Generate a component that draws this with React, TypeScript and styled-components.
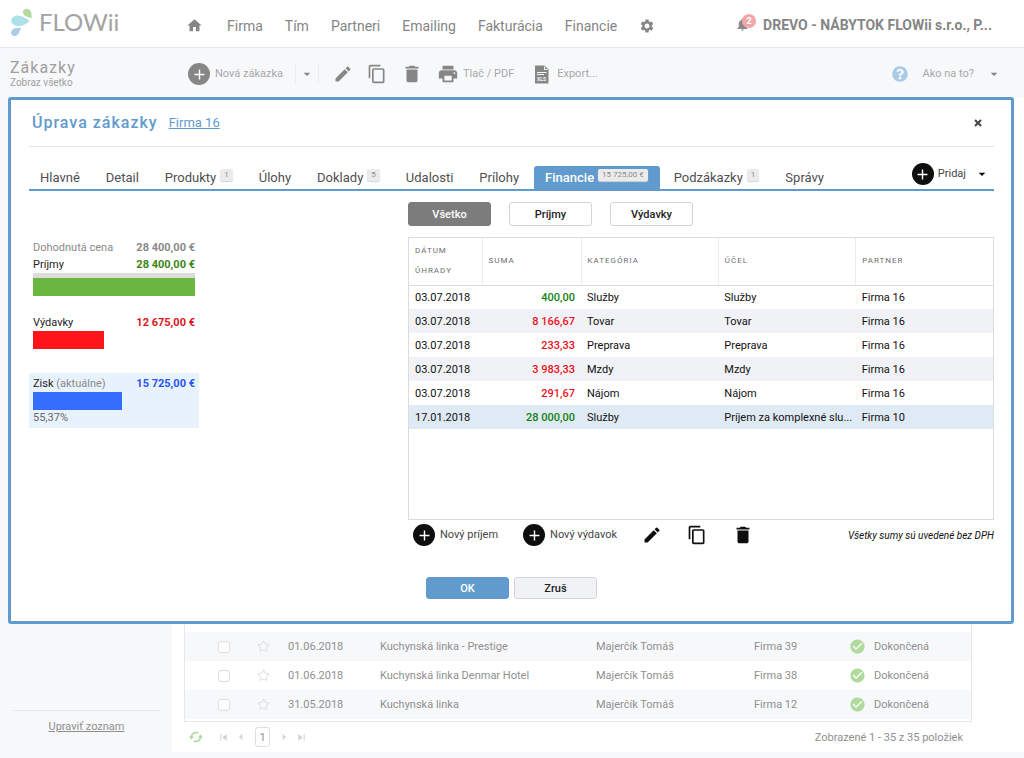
import React from "react";
import styled, { createGlobalStyle } from "styled-components";
import {
  MdAdd,
  MdArrowDropDown,
  MdArrowLeft,
  MdArrowRight,
  MdCheckCircle,
  MdContentCopy,
  MdDelete,
  MdEdit,
  MdHome,
  MdNotifications,
  MdPrint,
  MdSettings,
  MdSkipNext,
  MdSkipPrevious,
} from "react-icons/md";
import { FaQuestionCircle } from "react-icons/fa";
import { Star } from "lucide-react";

const GlobalStyle = createGlobalStyle`
  * { box-sizing: border-box; }
  body { margin: 0; background: #f7f8fa; font-family: Roboto, "Liberation Sans", sans-serif; font-size: 11px; color: #222; }
  button, input { font: inherit; }
`;

const Page = styled.div`
  position: relative;
  min-height: 100vh;
  display: flex;
  flex-direction: column;
`;

/* ---------- top bar ---------- */

const TopBar = styled.header`
  display: flex;
  align-items: center;
  height: 48px;
  padding: 0 32px 0 10px;
  background: #fff;
  border-bottom: 1px solid #e9e9ea;
`;

const Logo = styled.a`
  display: flex;
  align-items: center;
  gap: 6px;
  width: 176px;
  padding-bottom: 3px;
  color: #a3a3a3;
  font-family: Lato, sans-serif;
  font-size: 24px;
  line-height: 28px;
  text-decoration: none;
`;

const MainNav = styled.nav`
  display: flex;
  align-items: center;
  gap: 22px;
  padding-top: 4px;
`;

const NavLink = styled.a`
  display: flex;
  color: #858585;
  font-size: 14px;
  line-height: 20px;
  text-decoration: none;
`;

const HomeLink = styled(NavLink)`
  margin-right: 2px;
`;

const Account = styled.div`
  display: flex;
  align-items: center;
  gap: 13px;
  min-width: 0;
  margin-left: auto;
  padding-top: 2px;
`;

const Bell = styled.button`
  position: relative;
  display: flex;
  padding: 0;
  border: 0;
  background: none;
  color: #8a8a8a;
`;

const BellCount = styled.span`
  position: absolute;
  top: -3px;
  right: -6px;
  width: 14px;
  height: 14px;
  border-radius: 7px;
  background: #f3a6a8;
  color: #fff;
  font-size: 9px;
  font-weight: 700;
  line-height: 14px;
  text-align: center;
`;

const Company = styled.span`
  overflow: hidden;
  color: #858585;
  font-size: 14px;
  font-weight: 700;
  line-height: 20px;
  white-space: nowrap;
  text-overflow: ellipsis;
`;

/* ---------- tool bar ---------- */

const ToolBar = styled.div`
  display: flex;
  align-items: center;
  height: 50px;
  padding: 2px 22px 0 10px;
  background: #f7f8fa;
`;

const PageTitle = styled.div`
  width: 178px;
`;

const TitleText = styled.h1`
  margin: 0;
  color: #a0a0a0;
  font-size: 16px;
  font-weight: 400;
  line-height: 18px;
  letter-spacing: 1px;
`;

const SubTitle = styled.div`
  color: #a0a0a0;
  font-size: 10px;
  line-height: 12px;
`;

const ToolButton = styled.button<{ $gap?: number; $strong?: boolean }>`
  display: flex;
  align-items: center;
  gap: ${(p) => p.$gap ?? 4}px;
  padding: 0;
  border: 0;
  background: none;
  color: ${(p) => (p.$strong ? "#444" : "#a8a8a8")};
  font-size: 11px;
  line-height: 16px;
  white-space: nowrap;

  svg {
    flex: none;
    color: ${(p) => (p.$strong ? "#0e0e0e" : "#868686")};
  }
`;

const PlusDisc = styled.span<{ $strong?: boolean }>`
  display: flex;
  align-items: center;
  justify-content: center;
  width: 22px;
  height: 22px;
  border-radius: 11px;
  background: ${(p) => (p.$strong ? "#0e0e0e" : "#868686")};

  && svg {
    color: #fff;
    stroke: #fff;
  }
`;

const SplitCaret = styled.button`
  display: flex;
  align-items: center;
  justify-content: center;
  width: 24px;
  height: 20px;
  margin: 0 14px 0 12px;
  padding: 0;
  border: solid #ececef;
  border-width: 0 1px;
  background: none;
  color: #868686;
`;

const Tools = styled.div`
  display: flex;
  align-items: center;
  gap: 14px;
  margin-right: 20px;
`;

const Help = styled.div`
  display: flex;
  align-items: center;
  gap: 14px;
  margin-left: auto;

  > svg {
    color: #a9cbe6;
  }
`;

/* ---------- page behind the dialog ---------- */

const Body = styled.div`
  display: flex;
  flex: 1;
  min-height: 654px;
  padding-bottom: 6px;
`;

const SideBar = styled.aside`
  display: flex;
  flex-direction: column;
  justify-content: flex-end;
  width: 172px;
  padding: 0 12px 17px 13px;
`;

const EditList = styled.div`
  padding-top: 8px;
  border-top: 1px solid #e6e7e9;
  text-align: center;
  line-height: 16px;

  a {
    color: #8f8f8f;
  }
`;

const Content = styled.main`
  display: flex;
  flex: 1;
  flex-direction: column;
  padding: 0 52px 0 12px;
  background: #fff;
`;

const ListFrame = styled.div`
  display: flex;
  flex: 1;
  flex-direction: column;
  justify-content: flex-end;
  padding-bottom: 2px;
  border: solid #e6e7e9;
  border-width: 0 1px 1px;
`;

const OrderTable = styled.table`
  width: 100%;
  border-collapse: collapse;
  table-layout: fixed;
  color: #8f8f8f;

  tr:nth-child(odd) {
    background: #f7f8fa;
  }

  td {
    height: 29px;
    padding: 0;
    white-space: nowrap;
  }
`;

const RowCheck = styled.input`
  appearance: none;
  display: block;
  width: 12px;
  height: 12px;
  margin: 0 0 0 33px;
  border: 1px solid #dedee0;
  border-radius: 3px;
  background: #fff;
`;

const StarButton = styled.button`
  display: block;
  padding: 0;
  border: 0;
  background: none;
  color: #e2e2e4;

  svg {
    display: block;
  }
`;

const Status = styled.span`
  display: flex;
  align-items: center;
  gap: 8px;

  svg {
    color: #b0da9c;
  }
`;

const Pager = styled.div`
  display: flex;
  align-items: center;
  justify-content: space-between;
  height: 30px;
  padding: 0 9px 0 5px;
  color: #8f8f8f;
`;

const PagerControls = styled.div`
  display: flex;
  align-items: center;
  gap: 3px;
`;

const PagerButton = styled.button<{ $refresh?: boolean }>`
  display: flex;
  margin-right: ${(p) => (p.$refresh ? 11 : 0)}px;
  padding: 0;
  border: 0;
  background: none;
  color: ${(p) => (p.$refresh ? "#a9d797" : "#d3d3d5")};
`;

const PageNumber = styled.button`
  width: 15px;
  height: 20px;
  margin: 0 3px;
  padding: 0;
  border: 1px solid #dedee0;
  border-radius: 3px;
  background: #fff;
  color: #8f8f8f;
`;

/* ---------- dialog ---------- */

const Dialog = styled.section`
  position: absolute;
  top: 97px;
  right: 10px;
  left: 8px;
  padding: 0 17px 22px 18px;
  border: 3px solid #619bcd;
  border-radius: 3px;
  background: #fff;
`;

const DialogHead = styled.div`
  display: flex;
  align-items: center;
  height: 47px;
  padding: 0 12px 0 3px;
  border-bottom: 1px solid #e4e4e4;
`;

const DialogTitle = styled.h2`
  margin: 0 11px 0 0;
  color: #619bcd;
  font-size: 16px;
  font-weight: 500;
  line-height: 20px;
  letter-spacing: 1px;
`;

const FirmLink = styled.a`
  color: #619bcd;
  font-size: 13px;
  line-height: 20px;
`;

const CloseButton = styled.button`
  display: flex;
  margin-left: auto;
  padding: 0;
  border: 0;
  background: none;
`;

const TabBar = styled.div`
  display: flex;
  align-items: flex-end;
  height: 44px;
  border-bottom: 2px solid #619bcd;
`;

const Tabs = styled.div`
  display: flex;
  flex: 1;
  gap: 3px;
`;

const Tab = styled.button<{ $active?: boolean }>`
  display: flex;
  gap: 4px;
  height: 23px;
  padding: 2px 12px 0 11px;
  border: 0;
  border-radius: 3px 3px 0 0;
  background: ${(p) => (p.$active ? "#619bcd" : "none")};
  color: ${(p) => (p.$active ? "#fff" : "#505050")};
  font-size: 13px;
  font-weight: ${(p) => (p.$active ? 500 : 400)};
  line-height: 20px;
  white-space: nowrap;
`;

const TabBadge = styled.span`
  height: 12px;
  margin-top: 1px;
  padding: 0 4px;
  border-radius: 2px;
  background: #ebebeb;
  box-shadow: 0 1px 1px #d4d4d4;
  color: #8a8a8a;
  font-size: 8px;
  font-weight: 400;
  line-height: 12px;
`;

const AddMenu = styled.div`
  display: flex;
  align-items: center;
  gap: 8px;
  padding: 0 4px 4px 0;
`;

const DialogBody = styled.div`
  display: flex;
  padding-top: 11px;
`;

const Summary = styled.div`
  display: flex;
  flex-direction: column;
  gap: 14px;
  width: 170px;
  margin-right: 209px;
  padding-top: 35px;
`;

const SummaryBox = styled.div<{ $tinted?: boolean }>`
  margin-top: ${(p) => (p.$tinted ? 8 : 0)}px;
  padding: 2px 4px;
  background: ${(p) => (p.$tinted ? "#e8f2fd" : "none")};
`;

const SummaryLine = styled.div<{ $color: string; $muted?: boolean }>`
  display: flex;
  justify-content: space-between;
  color: ${(p) => (p.$muted ? "#8a8a8a" : "#222")};
  line-height: 17px;

  strong {
    color: ${(p) => p.$color};
  }

  small {
    color: #8a8a8a;
    font-size: 11px;
  }
`;

const Bar = styled.div<{ $color: string; $topped?: boolean }>`
  height: ${(p) => (p.$topped ? 23 : 18)}px;
  border-top: ${(p) => (p.$topped ? "5px solid #dcdcdc" : "0")};
  background: ${(p) => p.$color};
`;

const Percent = styled.div`
  color: #666;
  line-height: 16px;
`;

const Ledger = styled.div`
  flex: 1;
  min-width: 0;
`;

const Filters = styled.div`
  display: flex;
  gap: 18px;
  margin-bottom: 11px;
`;

const Button = styled.button<{ $kind?: "dark" | "primary" | "light" }>`
  width: 83px;
  height: ${(p) => (p.$kind === "primary" || p.$kind === "light" ? 22 : 24)}px;
  padding: 0;
  border: 1px solid
    ${(p) => (p.$kind === "dark" ? "#7c7c7c" : p.$kind === "primary" ? "#619bcd" : "#d4d4d6")};
  border-radius: 3px;
  background: ${(p) =>
    p.$kind === "dark" ? "#7c7c7c" : p.$kind === "primary" ? "#619bcd" : p.$kind === "light" ? "#f1f2f6" : "#fff"};
  color: ${(p) => (p.$kind === "dark" || p.$kind === "primary" ? "#fff" : "#222")};
  font-size: 11px;
  font-weight: 500;
`;

const TableFrame = styled.div`
  height: 283px;
  border: 1px solid #dcdcdc;
`;

const PaymentTable = styled.table`
  width: 100%;
  border-collapse: collapse;
  table-layout: fixed;

  th {
    height: 47px;
    padding: 0 0 0 6px;
    border-right: 1px solid #ececec;
    border-bottom: 1px solid #dcdcdc;
    color: #6e6e6e;
    font-size: 8px;
    font-weight: 400;
    line-height: 20px;
    letter-spacing: 1px;
    text-align: left;
  }

  th:last-child {
    border-right: 0;
  }

  td {
    height: 24px;
    padding: 0 0 0 6px;
    overflow: hidden;
    color: #111;
    white-space: nowrap;
    text-overflow: ellipsis;
  }

  tbody tr:nth-child(even) {
    background: #f0f2f6;
  }

  tbody tr:last-child {
    background: #dfeaf5;
  }
`;

const Amount = styled.td<{ $income?: boolean }>`
  && {
    padding-right: 6px;
    color: ${(p) => (p.$income ? "#128012" : "#ee1122")};
    font-weight: 500;
    text-align: right;
  }
`;

const LedgerTools = styled.div`
  display: flex;
  align-items: center;
  gap: 25px;
  height: 30px;
  padding-left: 5px;
`;

const VatNote = styled.em`
  margin-left: auto;
  color: #111;
  font-size: 10px;
  white-space: nowrap;
`;

const Actions = styled.div`
  display: flex;
  justify-content: center;
  gap: 5px;
  margin-top: 27px;
`;

/* ---------- drawings ---------- */

const Drops = () => (
  <svg width="23" height="29" viewBox="0 0 23 29" aria-hidden="true">
    <path d="M22 10C16 9 12.500 7 13 3.500C13.500 0 18.500 0 20.500 3C21.800 5 21.500 7.500 22 10Z" fill="#b3dba0" />
    <path d="M19.500 13C15 18 8 19 4 17C0 15 .5 9.500 5 8C10 6.500 14.500 9.500 19.500 13Z" fill="#ade0e8" />
    <path d="M11 19.500C10 23 9 27.500 4.500 28C1 28 0 24 2.500 21.500C4.500 19.500 8 20.500 11 19.500Z" fill="#abcdea" />
  </svg>
);

const XlsIcon = () => (
  <svg width="15" height="19" viewBox="0 0 15 19" aria-hidden="true">
    <path d="M1 0.500H10.500L14.500 4.500V18.500H1Z" fill="#868686" />
    <path d="M10.500 1.500V4.500H13.500" fill="none" stroke="#f7f8fa" />
    <path d="M3 7.500H12.500M3 9.500H10" stroke="#f7f8fa" />
    <text x="7.500" y="16" fill="#f7f8fa" fontSize="5" fontWeight="700" textAnchor="middle">
      XLS
    </text>
  </svg>
);

const RefreshIcon = () => (
  <svg width="14" height="12" viewBox="0 0 14 12" fill="none" stroke="currentColor" strokeWidth="1.500" aria-hidden="true">
    <path d="M2.500 6A4.500 4.500 0 0 1 9 2M11.500 6A4.500 4.500 0 0 1 5 10" />
    <path d="M0 5.500H5L2.500 8.500ZM9 6.500H14L11.500 3.500Z" fill="currentColor" stroke="none" />
  </svg>
);

const CrossIcon = () => (
  <svg width="8" height="8" viewBox="0 0 8 8" stroke="#444" strokeWidth="2" aria-hidden="true">
    <path d="M1 1L7 7M7 1L1 7" />
  </svg>
);

/* ---------- data ---------- */

const navItems = ["Firma", "Tím", "Partneri", "Emailing", "Fakturácia", "Financie"];

const tabs: { label: string; badge?: string }[] = [
  { label: "Hlavné" },
  { label: "Detail" },
  { label: "Produkty", badge: "1" },
  { label: "Úlohy" },
  { label: "Doklady", badge: "5" },
  { label: "Udalosti" },
  { label: "Prílohy" },
  { label: "Financie", badge: "15 725,00 €" },
  { label: "Podzákazky", badge: "1" },
  { label: "Správy" },
];

const payments = [
  { date: "03.07.2018", sum: "400,00", income: true, category: "Služby", purpose: "Služby", partner: "Firma 16" },
  { date: "03.07.2018", sum: "8 166,67", category: "Tovar", purpose: "Tovar", partner: "Firma 16" },
  { date: "03.07.2018", sum: "233,33", category: "Preprava", purpose: "Preprava", partner: "Firma 16" },
  { date: "03.07.2018", sum: "3 983,33", category: "Mzdy", purpose: "Mzdy", partner: "Firma 16" },
  { date: "03.07.2018", sum: "291,67", category: "Nájom", purpose: "Nájom", partner: "Firma 16" },
  {
    date: "17.01.2018",
    sum: "28 000,00",
    income: true,
    category: "Služby",
    purpose: "Príjem za komplexné slu...",
    partner: "Firma 10",
  },
];

const orders = [
  { date: "01.06.2018", name: "Kuchynská linka - Prestige", firm: "Firma 39" },
  { date: "01.06.2018", name: "Kuchynská linka Denmar Hotel", firm: "Firma 38" },
  { date: "31.05.2018", name: "Kuchynská linka", firm: "Firma 12" },
];

export default function App() {
  return (
    <Page>
      <GlobalStyle />
      <TopBar>
        <Logo href="#">
          <Drops />
          FLOWii
        </Logo>
        <MainNav>
          <HomeLink href="#" aria-label="Domov">
            <MdHome size={17} />
          </HomeLink>
          {navItems.map((item) => (
            <NavLink key={item} href="#">
              {item}
            </NavLink>
          ))}
          <NavLink href="#" aria-label="Nastavenia">
            <MdSettings size={16} />
          </NavLink>
        </MainNav>
        <Account>
          <Bell aria-label="Upozornenia">
            <MdNotifications size={15} />
            <BellCount>2</BellCount>
          </Bell>
          <Company>DREVO - NÁBYTOK FLOWii s.r.o., P...</Company>
        </Account>
      </TopBar>

      <ToolBar>
        <PageTitle>
          <TitleText>Zákazky</TitleText>
          <SubTitle>Zobraz všetko</SubTitle>
        </PageTitle>
        <ToolButton $gap={5}>
          <PlusDisc>
            <MdAdd size={17} />
          </PlusDisc>
          Nová zákazka
        </ToolButton>
        <SplitCaret aria-label="Ďalšie možnosti">
          <MdArrowDropDown size={16} />
        </SplitCaret>
        <Tools>
          <ToolButton aria-label="Upraviť">
            <MdEdit size={20} />
          </ToolButton>
          <ToolButton aria-label="Kopírovať">
            <MdContentCopy size={20} />
          </ToolButton>
          <ToolButton aria-label="Zmazať">
            <MdDelete size={22} />
          </ToolButton>
          <ToolButton>
            <MdPrint size={22} />
            Tlač / PDF
          </ToolButton>
        </Tools>
        <ToolButton $gap={8}>
          <XlsIcon />
          Export...
        </ToolButton>
        <Help>
          <FaQuestionCircle size={16} />
          <ToolButton $gap={12}>
            Ako na to?
            <MdArrowDropDown size={16} />
          </ToolButton>
        </Help>
      </ToolBar>

      <Body>
        <SideBar>
          <EditList>
            <a href="#">Upraviť zoznam</a>
          </EditList>
        </SideBar>
        <Content>
          <ListFrame>
            <OrderTable>
              <colgroup>
                <col style={{ width: 72 }} />
                <col style={{ width: 31 }} />
                <col style={{ width: 92 }} />
                <col />
                <col style={{ width: 158 }} />
                <col style={{ width: 95 }} />
                <col style={{ width: 122 }} />
              </colgroup>
              <tbody>
                {orders.map((order) => (
                  <tr key={order.firm}>
                    <td>
                      <RowCheck type="checkbox" aria-label={order.name} />
                    </td>
                    <td>
                      <StarButton aria-label="Obľúbené">
                        <Star size={13} strokeWidth={2} />
                      </StarButton>
                    </td>
                    <td>{order.date}</td>
                    <td>{order.name}</td>
                    <td>Majerčík Tomáš</td>
                    <td>{order.firm}</td>
                    <td>
                      <Status>
                        <MdCheckCircle size={17} />
                        Dokončená
                      </Status>
                    </td>
                  </tr>
                ))}
              </tbody>
            </OrderTable>
          </ListFrame>
          <Pager>
            <PagerControls>
              <PagerButton $refresh aria-label="Obnoviť">
                <RefreshIcon />
              </PagerButton>
              <PagerButton aria-label="Prvá strana">
                <MdSkipPrevious size={13} />
              </PagerButton>
              <PagerButton aria-label="Predchádzajúca strana">
                <MdArrowLeft size={16} />
              </PagerButton>
              <PageNumber>1</PageNumber>
              <PagerButton aria-label="Nasledujúca strana">
                <MdArrowRight size={16} />
              </PagerButton>
              <PagerButton aria-label="Posledná strana">
                <MdSkipNext size={13} />
              </PagerButton>
            </PagerControls>
            <span>Zobrazené 1 - 35 z 35 položiek</span>
          </Pager>
        </Content>
      </Body>

      <Dialog role="dialog" aria-labelledby="dialog-title">
        <DialogHead>
          <DialogTitle id="dialog-title">Úprava zákazky</DialogTitle>
          <FirmLink href="#">Firma 16</FirmLink>
          <CloseButton aria-label="Zavrieť">
            <CrossIcon />
          </CloseButton>
        </DialogHead>

        <TabBar>
          <Tabs role="tablist">
            {tabs.map((tab) => {
              const active = tab.label === "Financie";
              return (
                <Tab key={tab.label} role="tab" aria-selected={active} $active={active}>
                  {tab.label}
                  {tab.badge && <TabBadge>{tab.badge}</TabBadge>}
                </Tab>
              );
            })}
          </Tabs>
          <AddMenu>
            <ToolButton $strong>
              <PlusDisc $strong>
                <MdAdd size={17} />
              </PlusDisc>
              Pridaj
            </ToolButton>
            <ToolButton $strong aria-label="Možnosti pridania">
              <MdArrowDropDown size={16} />
            </ToolButton>
          </AddMenu>
        </TabBar>

        <DialogBody>
          <Summary>
            <SummaryBox>
              <SummaryLine $color="#8a8a8a" $muted>
                Dohodnutá cena <strong>28 400,00 €</strong>
              </SummaryLine>
              <SummaryLine $color="#3d8512">
                Príjmy <strong>28 400,00 €</strong>
              </SummaryLine>
              <Bar $color="#69b741" $topped />
            </SummaryBox>
            <SummaryBox>
              <SummaryLine $color="#dc1620">
                Výdavky <strong>12 675,00 €</strong>
              </SummaryLine>
              <Bar $color="#fd151b" style={{ width: "44%" }} />
            </SummaryBox>
            <SummaryBox $tinted>
              <SummaryLine $color="#2755f0">
                <span>
                  Zisk <small>(aktuálne)</small>
                </span>
                <strong>15 725,00 €</strong>
              </SummaryLine>
              <Bar $color="#336eff" style={{ width: "55%" }} />
              <Percent>55,37%</Percent>
            </SummaryBox>
          </Summary>

          <Ledger>
            <Filters>
              <Button $kind="dark">Všetko</Button>
              <Button>Príjmy</Button>
              <Button>Výdavky</Button>
            </Filters>
            <TableFrame>
              <PaymentTable>
                <colgroup>
                  <col style={{ width: 73 }} />
                  <col style={{ width: 99 }} />
                  <col />
                  <col />
                  <col />
                </colgroup>
                <thead>
                  <tr>
                    <th>DÁTUM ÚHRADY</th>
                    <th>SUMA</th>
                    <th>KATEGÓRIA</th>
                    <th>ÚČEL</th>
                    <th>PARTNER</th>
                  </tr>
                </thead>
                <tbody>
                  {payments.map((row) => (
                    <tr key={row.sum}>
                      <td>{row.date}</td>
                      <Amount $income={row.income}>{row.sum}</Amount>
                      <td>{row.category}</td>
                      <td>{row.purpose}</td>
                      <td>{row.partner}</td>
                    </tr>
                  ))}
                </tbody>
              </PaymentTable>
            </TableFrame>
            <LedgerTools>
              <ToolButton $strong $gap={5}>
                <PlusDisc $strong>
                  <MdAdd size={17} />
                </PlusDisc>
                Nový príjem
              </ToolButton>
              <ToolButton $strong $gap={5}>
                <PlusDisc $strong>
                  <MdAdd size={17} />
                </PlusDisc>
                Nový výdavok
              </ToolButton>
              <ToolButton $strong aria-label="Upraviť platbu">
                <MdEdit size={20} />
              </ToolButton>
              <ToolButton $strong aria-label="Kopírovať platbu">
                <MdContentCopy size={20} />
              </ToolButton>
              <ToolButton $strong aria-label="Zmazať platbu">
                <MdDelete size={22} />
              </ToolButton>
              <VatNote>Všetky sumy sú uvedené bez DPH</VatNote>
            </LedgerTools>
          </Ledger>
        </DialogBody>

        <Actions>
          <Button $kind="primary">OK</Button>
          <Button $kind="light">Zruš</Button>
        </Actions>
      </Dialog>
    </Page>
  );
}
